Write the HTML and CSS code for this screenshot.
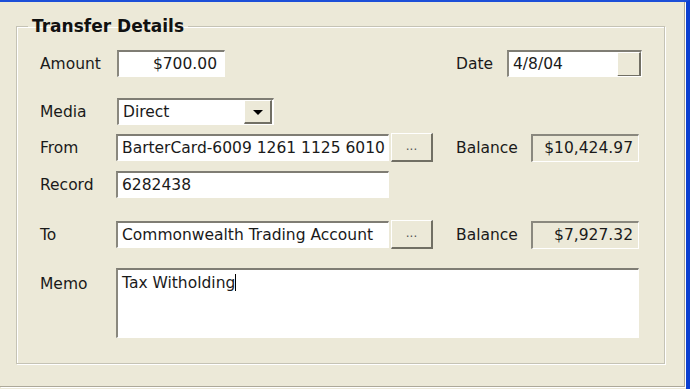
FILE: index.html
```html
<!DOCTYPE html>
<html>
<head>
<meta charset="utf-8">
<title>Transfer Details</title>
<link rel="stylesheet" href="styles.css">
</head>
<body>
<div class="window">
  <div class="panel">
    <fieldset class="group">
      <legend>Transfer Details</legend>

      <div class="row row-amount">
        <span class="label">Amount</span>
        <div class="edit amount">$700.00</div>
        <span class="label-right date-label">Date</span>
        <div class="edit date">
          <span class="date-text">4/8/04</span>
          <span class="btn date-btn"></span>
        </div>
      </div>

      <div class="row row-media">
        <span class="label">Media</span>
        <div class="edit combo">
          <span class="combo-text">Direct</span>
          <span class="btn combo-btn"><span class="arrow"></span></span>
        </div>
      </div>

      <div class="row row-from">
        <span class="label">From</span>
        <div class="edit wide">BarterCard-6009 1261 1125 6010</div>
        <span class="btn dots">...</span>
        <span class="label-right balance-label">Balance</span>
        <div class="static">$10,424.97</div>
      </div>

      <div class="row row-record">
        <span class="label">Record</span>
        <div class="edit wide">6282438</div>
      </div>

      <div class="row row-to">
        <span class="label">To</span>
        <div class="edit wide">Commonwealth Trading Account</div>
        <span class="btn dots">...</span>
        <span class="label-right balance-label">Balance</span>
        <div class="static">$7,927.32</div>
      </div>

      <div class="row row-memo">
        <span class="label">Memo</span>
        <div class="edit memo">Tax Witholding<span class="caret"></span></div>
      </div>
    </fieldset>
  </div>
</div>
</body>
</html>
```

FILE: styles.css
```css
/* XP style dialog, transfer details group */
body {
  margin: 0;
  background: #ece9d8;
  font-family: "DejaVu Sans", "Liberation Sans", sans-serif;
  font-size: 15.5px;
  color: #1a1a1a;
}

.window {
  height: 389px;
  box-sizing: border-box;
  border-top: 2px solid #1c4fd8;
  border-right: 4px solid #0b3fd1;
  display: flex;
}

.panel {
  flex: 1;
  padding: 15px 0 0 16px;
  margin: 0 1px 2px 0;
  border-right: 1px solid #aca899;
  border-bottom: 1px solid #aca899;
  box-shadow: 1px 1px 0 #fff;
}

/* etched group frame: gray line with a white one under it */
.group {
  width: 649px;
  height: 347px;
  box-sizing: border-box;
  margin: 0;
  padding: 14px 0 0 23px;
  border: 1px solid #c5c3b5;
  box-shadow: inset 1px 1px 0 #fff, 1px 1px 0 #fff;
}

.group legend {
  margin-left: -12px;
  padding: 0 4px;
  font-weight: bold;
  font-size: 17px;
  line-height: 19px;
  color: #111;
}

.row {
  display: flex;
  align-items: center;
  height: 27px;
}

.row-media { margin-top: 21px; }
.row-from { margin-top: 9px; }
.row-record { margin-top: 10px; }
.row-to { margin-top: 23px; }
.row-memo { margin-top: 20px; align-items: flex-start; height: 70px; }

.label {
  width: 76px;
  flex: none;
}

.row-amount .label,
.row-media .label { width: 77px; }

.row-memo .label { padding-top: 7px; }

.edit {
  box-sizing: border-box;
  height: 27px;
  background: #fff;
  border-style: solid;
  border-width: 2px 1px 1px 2px;
  border-color: #7f7d74 #fff #fff #8a887e;
  padding: 0 4px;
  display: flex;
  align-items: center;
  white-space: nowrap;
  overflow: hidden;
}

.amount {
  width: 108px;
  justify-content: flex-end;
  padding-right: 7px;
}

.date-label { margin-left: 231px; width: 51px; }
.balance-label { margin-left: 23px; width: 75px; }
.label-right { flex: none; }

.date {
  width: 135px;
  padding-right: 0;
  justify-content: space-between;
}

.btn {
  box-sizing: border-box;
  background: #ece9d8;
  border-style: solid;
  border-width: 1px 2px 2px 1px;
  border-color: #fff #716f64 #716f64 #fff;
}

.date-btn {
  width: 24px;
  height: 25px;
}

.combo {
  width: 157px;
  padding-right: 1px;
  justify-content: space-between;
}

.combo-btn {
  width: 28px;
  height: 24px;
  display: flex;
  align-items: center;
  justify-content: center;
}

.arrow {
  width: 0;
  height: 0;
  border-left: 5px solid transparent;
  border-right: 5px solid transparent;
  border-top: 5px solid #000;
  margin-top: 2px;
}

.wide { width: 273px; }

.dots {
  width: 42px;
  height: 29px;
  margin-left: 2px;
  display: flex;
  align-items: center;
  justify-content: center;
  font-size: 12px;
  color: #555;
  padding-bottom: 2px;
}

.static {
  box-sizing: border-box;
  width: 108px;
  height: 28px;
  border-style: solid;
  border-width: 2px 1px 1px 2px;
  border-color: #8a887e #fff #fff #8a887e;
  display: flex;
  align-items: center;
  justify-content: flex-end;
  padding-right: 5px;
}

.memo {
  width: 523px;
  height: 70px;
  align-items: flex-start;
  padding-top: 4px;
}

.caret {
  display: inline-block;
  width: 1px;
  height: 17px;
  background: #000;
}
```
